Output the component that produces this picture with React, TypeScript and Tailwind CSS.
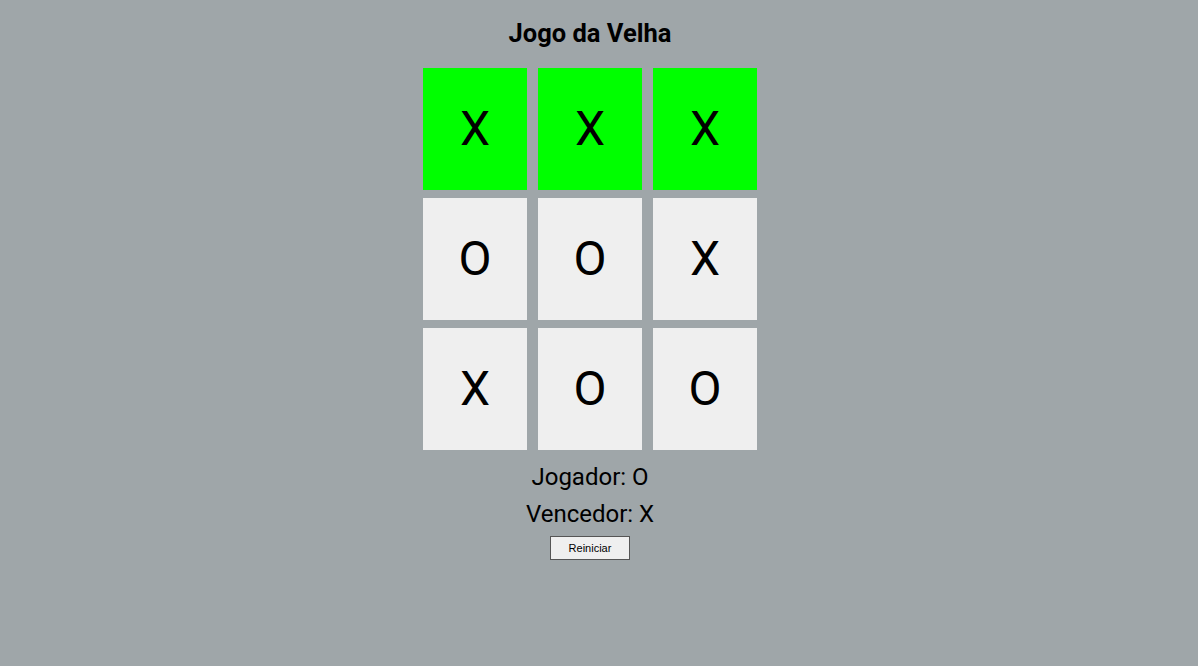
import React from 'react';

const BOARD = ['X', 'X', 'X', 'O', 'O', 'X', 'X', 'O', 'O'];
const WIN_LINE = [0, 1, 2];

/**
 * Casa do tabuleiro
 */
const Cell = ({ value, win }: { value: string; win: boolean }) => (
  <div
    className={`w-[104px] h-[122px] flex items-center justify-center text-[48px] text-black ${
      win ? 'bg-[#00ff00]' : 'bg-[#efefef]'
    }`}
  >
    {value}
  </div>
);

export default function App() {
  return (
    <div
      className="min-h-[666px] bg-[#9fa6a9]"
      style={{ fontFamily: 'Roboto, "Liberation Sans", sans-serif' }}
    >
      <div className="w-[1180px] flex flex-col items-center">
        <h1 className="mt-[18px] text-[25.5px] leading-[30px] font-bold text-black">Jogo da Velha</h1>
        <div className="mt-[20px] grid grid-cols-[104px_104px_104px] gap-x-[11px] gap-y-[8px]">
          {BOARD.map((v, i) => (
            <Cell key={i} value={v} win={WIN_LINE.includes(i)} />
          ))}
        </div>
        <p className="mt-[12px] text-[24px] leading-[30px] text-black">Jogador: O</p>
        <p className="mt-[7px] text-[24px] leading-[30px] text-black">Vencedor: X</p>
        <button
          className="mt-[7px] w-[80px] h-[24px] bg-[#efefef] border border-[#555] text-[11px] text-black"
          style={{ fontFamily: 'Arial, "Liberation Sans", sans-serif' }}
        >
          Reiniciar
        </button>
      </div>
    </div>
  );
}
